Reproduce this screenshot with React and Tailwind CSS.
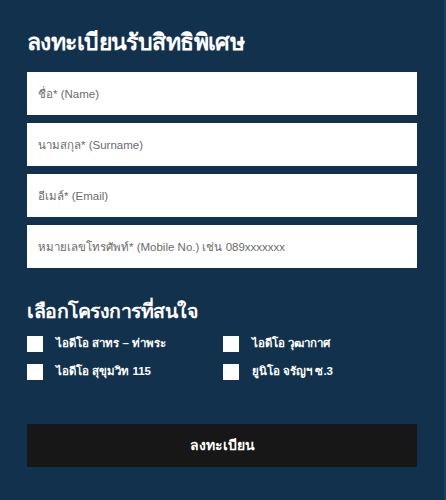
import { useState } from 'react';

const projects = [
    'ไอดีโอ สาทร – ท่าพระ',
    'ไอดีโอ วุฒากาศ',
    'ไอดีโอ สุขุมวิท 115',
    'ยูนิโอ จรัญฯ ซ.3',
];

const fields = [
    { name: 'name', placeholder: 'ชื่อ* (Name)' },
    { name: 'surname', placeholder: 'นามสกุล* (Surname)' },
    { name: 'email', placeholder: 'อีเมล์* (Email)' },
    { name: 'mobile', placeholder: 'หมายเลขโทรศัพท์* (Mobile No.) เช่น 089xxxxxxx' },
];

export default function App() {
    const [checked, setChecked] = useState({});

    return (
        <div className="min-h-[500px] w-[446px] bg-[#12314d] px-[27px] pt-[27px] pb-[32px] border-r-2 border-[#1a3d5c] font-['Liberation_Sans','Noto_Sans',sans-serif]">
            <h1 className="h-[31px] text-[23px] leading-[31px] font-semibold text-white tracking-tight">
                ลงทะเบียนรับสิทธิพิเศษ
            </h1>

            {/* Contact fields */}
            <div className="mt-[14px] flex flex-col gap-[8px]">
                {fields.map((f) => (
                    <input
                        key={f.name}
                        type="text"
                        placeholder={f.placeholder}
                        className="h-[43px] w-full bg-white px-[11px] text-[11.5px] text-[#333] placeholder:text-[#6b6b6b] outline-none"
                    />
                ))}
            </div>

            <h2 className="mt-[28px] h-[30px] text-[19.5px] leading-[30px] font-semibold text-white tracking-tight">
                เลือกโครงการที่สนใจ
            </h2>

            {/* Project checkboxes */}
            <div className="mt-[10px] grid grid-cols-2 gap-y-[12px]">
                {projects.map((p, i) => (
                    <label
                        key={p}
                        className={`flex items-center h-[16px] cursor-pointer ${i % 2 === 1 ? 'pl-[1px]' : ''}`}
                    >
                        <input
                            type="checkbox"
                            checked={!!checked[p]}
                            onChange={() => setChecked({ ...checked, [p]: !checked[p] })}
                            className="appearance-none h-[16px] w-[16px] bg-white shrink-0 checked:bg-[#d0d8e0]"
                        />
                        <span className="ml-[13px] text-[11.5px] font-bold text-white">{p}</span>
                    </label>
                ))}
            </div>

            <button
                type="button"
                className="mt-[44px] h-[43px] w-full bg-[#171717] text-[14px] font-bold text-white"
            >
                ลงทะเบียน
            </button>
        </div>
    );
}
